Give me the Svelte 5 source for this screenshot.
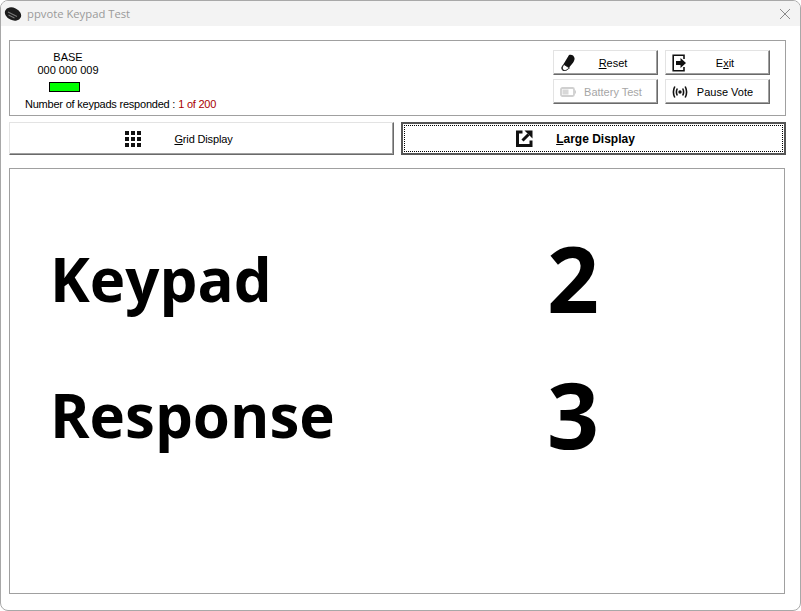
<script>
	let responded = 1;
	let total = 200;
</script>

<div class="window">
	<header class="titlebar">
		<svg class="logo" width="18" height="16" viewBox="0 0 18 16">
			<ellipse cx="9" cy="8" rx="8.5" ry="6.2" fill="#1c1c1c" transform="rotate(25 9 8)" />
			<path d="M4 6 L13 10.5 M4.5 9 L10.5 12" stroke="#777" stroke-width="1.1" fill="none" />
		</svg>
		<span class="title">ppvote Keypad Test</span>
		<svg class="close" width="12" height="12" viewBox="0 0 12 12">
			<path d="M1 1 L11 11 M11 1 L1 11" stroke="#8a8a8a" stroke-width="1" fill="none" />
		</svg>
	</header>

	<main class="content">
		<section class="panel">
			<div class="status">
				<div class="base">
					<div>BASE</div>
					<div>000 000 009</div>
				</div>
				<div class="led"></div>
				<div class="count">Number of keypads responded :<span class="red">{responded} of {total}</span></div>
			</div>
			<div class="actions">
				<button class="btn">
					<svg width="16" height="18" viewBox="0 0 16 18">
						<path d="M9 1 C11 0 14 1 14.5 4 C15 6 13 9 12 10 L7 16 C5 18 2 17 1.5 15 C1 13 2 12 3 11 Z" fill="#111" />
						<path d="M4 10.5 L9.5 14 L6.5 16 C5 17 3 16.5 2.5 15 C2 13.5 2.5 12.5 4 10.5 Z" fill="#fff" stroke="#111" stroke-width="0.8" />
					</svg>
					<span class="label"><u>R</u>eset</span>
				</button>
				<button class="btn">
					<svg width="16" height="18" viewBox="0 0 16 18">
						<path d="M12 5 V1.2 H1.2 V16.8 H12 V13" stroke="#111" stroke-width="1.6" fill="none" />
						<path d="M4 7 H8.5 V4 L14 9 L8.5 14 V11 H4 Z" fill="#111" />
					</svg>
					<span class="label">E<u>x</u>it</span>
				</button>
				<button class="btn disabled" disabled>
					<svg width="16" height="18" viewBox="0 0 16 18">
						<rect x="1" y="5" width="13" height="8" rx="1.5" fill="#fff" stroke="#d0d0d0" stroke-width="1.8" />
						<rect x="2.5" y="6.5" width="6" height="5" fill="#d8d8d8" />
						<rect x="14.5" y="7.5" width="1.5" height="3" fill="#d0d0d0" />
					</svg>
					<span class="label">Battery Test</span>
				</button>
				<button class="btn">
					<svg width="16" height="18" viewBox="0 0 16 18">
						<circle cx="8" cy="9" r="1.7" fill="#111" />
						<path d="M5.3 5.5 Q3.5 9 5.3 12.5 M10.7 5.5 Q12.5 9 10.7 12.5 M2.8 3.5 Q0 9 2.8 14.5 M13.2 3.5 Q16 9 13.2 14.5" stroke="#111" stroke-width="1.6" fill="none" />
					</svg>
					<span class="label">Pause Vote</span>
				</button>
			</div>
		</section>

		<nav class="tabs">
			<button class="tab grid">
				<svg width="16" height="16" viewBox="0 0 16 16">
					<g fill="#111">
						<rect x="0" y="0" width="4" height="4" /><rect x="6" y="0" width="4" height="4" /><rect x="12" y="0" width="4" height="4" />
						<rect x="0" y="6" width="4" height="4" /><rect x="6" y="6" width="4" height="4" /><rect x="12" y="6" width="4" height="4" />
						<rect x="0" y="12" width="4" height="4" /><rect x="6" y="12" width="4" height="4" /><rect x="12" y="12" width="4" height="4" />
					</g>
				</svg>
				<span><u>G</u>rid Display</span>
			</button>
			<button class="tab active">
				<span class="focus">
					<svg width="17" height="17" viewBox="0 0 17 17">
						<path d="M6.5 2 H1.5 V15.5 H15 V10.5" stroke="#111" stroke-width="3" fill="none" />
						<path d="M6.5 10.5 L12.5 4.5" stroke="#111" stroke-width="3" fill="none" />
						<path d="M8.5 0.5 H16.5 V8.5 Z" fill="#111" />
					</svg>
					<span><u>L</u>arge Display</span>
				</span>
			</button>
		</nav>

		<section class="display">
			<div class="big name">Keypad</div>
			<div class="big value">2</div>
			<div class="big name">Response</div>
			<div class="big value">3</div>
		</section>
	</main>
</div>

<style>
	:global(body) {
		background: #fff;
	}

	.window {
		width: 801px;
		height: 611px;
		box-sizing: border-box;
		display: flex;
		flex-direction: column;
		background: #fff;
		border: 1px solid #a8a8a8;
		border-radius: 8px;
		overflow: hidden;
		font-family: "Liberation Sans", Arial, sans-serif;
		font-size: 11px;
		color: #000;
	}

	.titlebar {
		height: 25px;
		flex: none;
		display: flex;
		align-items: center;
		padding: 0 9px 0 3px;
		background: #f3f3f3;
	}

	.logo {
		margin-right: 5px;
	}

	.title {
		font-family: "Open Sans", sans-serif;
		font-size: 11.25px;
		color: #9a9a9a;
		flex: 1;
	}

	.content {
		flex: 1;
		display: flex;
		flex-direction: column;
		padding: 14px 14px 16px 8px;
	}

	.panel {
		height: 76px;
		box-sizing: border-box;
		display: flex;
		justify-content: space-between;
		border: 1px solid #a0a0a0;
		padding: 9px 15px 0 15px;
	}

	.status {
		width: 200px;
	}

	.base {
		width: 86px;
		text-align: center;
		line-height: 13px;
		padding-top: 1px;
	}

	.led {
		width: 29px;
		height: 8px;
		margin: 5px 0 0 24px;
		background: #00ff00;
		border: 1px solid #000;
	}

	.count {
		margin-top: 5px;
		white-space: nowrap;
		line-height: 14px;
		letter-spacing: -0.22px;
	}

	.red {
		color: #a80000;
		margin-left: 3px;
	}

	.actions {
		display: grid;
		grid-template-columns: 105px 105px;
		grid-auto-rows: 25px;
		column-gap: 7px;
		row-gap: 4px;
	}

	button {
		font: inherit;
		color: inherit;
		background: #fff;
		padding: 0;
		margin: 0;
		box-sizing: border-box;
		border: 1px solid;
		border-color: #e3e3e3 #6a6a6a #6a6a6a #e3e3e3;
		box-shadow: inset -1px -1px 0 #a0a0a0;
	}

	.btn {
		display: flex;
		align-items: center;
		padding-left: 6px;
	}

	.btn .label {
		flex: 1;
		text-align: center;
		padding-right: 7px;
	}

	.disabled {
		color: #a6a6a6;
	}

	.tabs {
		display: grid;
		grid-template-columns: 385px 385px;
		column-gap: 7px;
		margin-top: 6px;
		height: 33px;
	}

	.tab {
		display: flex;
		align-items: center;
		justify-content: center;
	}

	.grid {
		gap: 33px;
		padding-right: 45px;
		letter-spacing: -0.15px;
	}

	.active {
		border: 2px solid #555;
		padding: 1px;
		box-shadow: none;
		font-size: 12px;
		font-weight: bold;
		letter-spacing: 0;
	}

	.focus {
		flex: 1;
		align-self: stretch;
		display: flex;
		align-items: center;
		justify-content: center;
		gap: 23px;
		padding-right: 36px;
		border: 1px dotted #000;
	}

	.display {
		margin-top: 13px;
		flex: 1;
		width: 776px;
		box-sizing: border-box;
		border: 1px solid #a0a0a0;
		display: grid;
		grid-template-columns: 497px 1fr;
		grid-template-rows: 136px 136px;
		align-content: start;
		padding: 41px 0 0 40px;
	}

	.big {
		font-family: "Open Sans", sans-serif;
		font-weight: 700;
		line-height: 136px;
		white-space: nowrap;
	}

	.name {
		font-size: 60px;
		padding-top: 1px;
	}

	.value {
		font-size: 91px;
	}
</style>
